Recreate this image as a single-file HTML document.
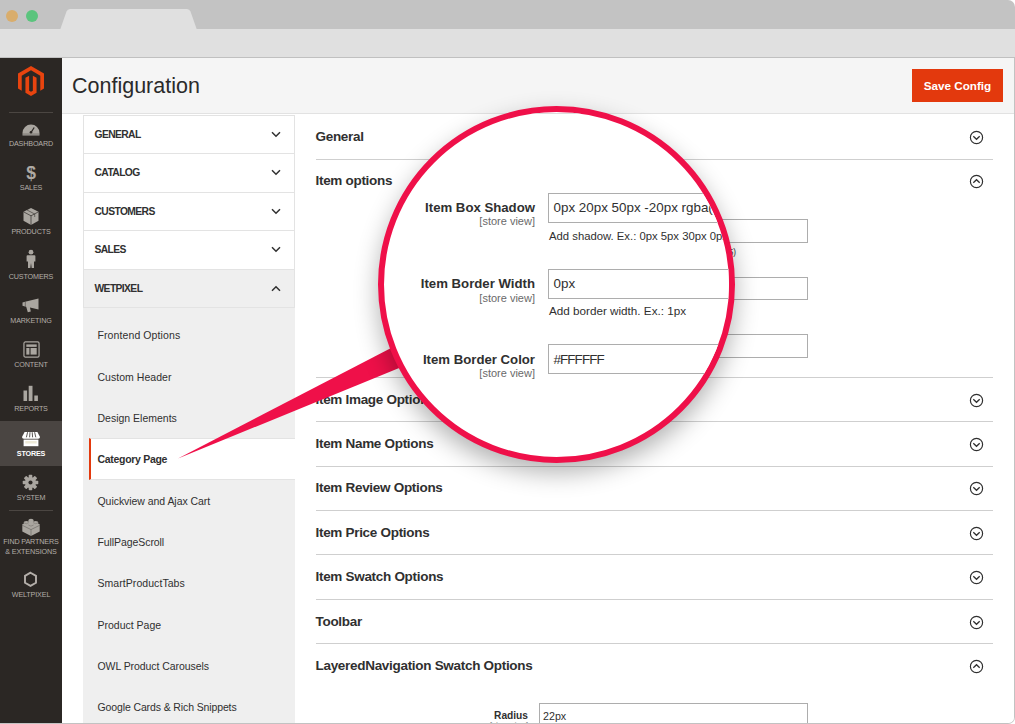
<!DOCTYPE html>
<html lang="en">
<head>
<meta charset="utf-8">
<title>Configuration</title>
<style>
*{box-sizing:border-box;margin:0;padding:0}
html,body{width:1015px;height:724px;overflow:hidden;background:#fff}
body{font-family:"Liberation Sans",sans-serif;color:#303030;position:relative}
.abs{position:absolute}
#frame{position:absolute;left:0;top:0;width:1015px;height:724px;overflow:hidden;border-radius:0 7px 7px 0;background:#fff}
#topbar{position:absolute;left:0;top:0;width:1015px;height:30px;background:#c3c3c3}
#addr{position:absolute;left:0;top:29.400px;width:1015px;height:28.600px;background:#e0e0e0;border-bottom:1px solid #c0c0c0}
.dot{position:absolute;width:12px;height:12px;border-radius:50%;top:10px}
#side{position:absolute;left:0;top:58px;width:62px;height:666px;background:#2b2724}
.mi{position:absolute;left:0;width:62px;text-align:center;font-size:7.200px;color:#b3aea8;line-height:9px;letter-spacing:-0.150px;white-space:nowrap}
.mi svg{position:absolute;left:0;top:0}
#hdr{position:absolute;left:62px;top:58px;width:953px;height:56px;background:#f5f5f5;border-bottom:1px solid #e2e2e2}
#title{position:absolute;left:72px;top:74px;font-size:21.500px;line-height:24px;color:#2a2a2a;white-space:nowrap}
#save{position:absolute;left:912px;top:69px;width:91px;height:33px;background:#e3390d;color:#fff;font-weight:bold;font-size:11.700px;line-height:34px;text-align:center;white-space:nowrap}
#nav{position:absolute;left:83px;top:115px;width:212px;height:609px;background:#efefef}
.nh{position:absolute;left:0;width:212px;height:39px;background:#fff;border:1px solid #e3e3e3;font-weight:bold;font-size:10.3px;letter-spacing:-0.6px;line-height:37px;padding-left:10.500px;color:#303030}
.nh svg{position:absolute;right:13px;top:15px}
.ni{position:absolute;left:14.5px;font-size:10.5px;line-height:14px;color:#303030;white-space:nowrap}
.sec{position:absolute;left:315.500px;font-weight:bold;font-size:13.500px;letter-spacing:-0.300px;line-height:16px;color:#303030;white-space:nowrap}
.hr{position:absolute;left:316px;width:677px;height:1px;background:#cfcfcf}
.tg{position:absolute;left:969px;width:15px;height:15px}
.inp{position:absolute;border:1px solid #adadad;background:#fff}

#mag{position:absolute;left:378px;top:106px;width:357px;height:357px;border-radius:50%;border:6.200px solid #ef1049;background:#fff;overflow:hidden;box-shadow:0 10px 25px rgba(0,0,0,.3)}
#mag .ml{position:absolute;left:-6px;width:157px;text-align:right;font-weight:bold;font-size:13.2px;line-height:16px;white-space:nowrap;color:#303030;margin-top:-2px}
#mag .ms{position:absolute;left:-6px;width:157px;text-align:right;font-size:11px;line-height:12px;white-space:nowrap;color:#6a6a6a;margin-top:-1px}
#mag .mi2{position:absolute;left:164px;width:330px;height:30px;border:1px solid #adadad;background:#fff;font-size:13.400px;line-height:28px;padding-left:4.500px;white-space:nowrap;color:#303030}
#mag .mn{position:absolute;left:165px;margin-top:-1px;font-size:11.300px;line-height:14px;white-space:nowrap;color:#303030}
</style>
</head>
<body>
<div id="frame">
<div id="topbar"></div>
<svg class="abs" style="left:55px;top:8px" width="150" height="22" viewBox="0 0 150 22"><path d="M5 22 L11.5 3.5 Q12.5 1 15 1 L132 1 Q134.500 1 135.500 3.500 L142 22 Z" fill="#e0e0e0"/></svg>
<div id="addr"></div>
<div class="dot" style="left:6px;background:#d9ad6c"></div>
<div class="dot" style="left:26px;background:#5bc47d"></div>

<div id="side"></div>

<!-- sidebar -->
<svg class="abs" style="left:18px;top:66px" width="26" height="30" viewBox="1.609 0 20.782 24"><path fill="#e8440f" d="M12 24l-4.455-2.572v-12l2.970-1.715v12.001l1.485.902 1.485-.902V7.713l2.971 1.715v12L12 24zM22.391 6v12l-2.969 1.714V7.713L12 3.430 4.574 7.713v12.001L1.609 18V6L12 0l10.391 6z"/></svg>
<div class="abs" style="left:9px;top:112px;width:44px;height:1px;background:#4b4642"></div>

<svg class="abs" style="left:22px;top:124px" width="18" height="12" viewBox="0 0 18 12"><path d="M0.500 11.500 V9 A8.500 8.500 0 0 1 17.500 9 V11.500 Z" fill="#aaa6a0"/><path d="M9 8.500 L12.200 3.500" stroke="#2b2724" stroke-width="1.300" fill="none"/><circle cx="9" cy="8.300" r="1.300" fill="#2b2724"/><rect x="0.500" y="9.700" width="17" height="0.700" fill="#2b2724" opacity=".5"/></svg>
<div class="mi" style="top:139px">DASHBOARD</div>

<div class="abs" style="left:0;top:162px;width:62px;text-align:center;font-weight:bold;font-size:17.500px;line-height:22px;color:#aeaaa4">$</div>
<div class="mi" style="top:183px">SALES</div>

<svg class="abs" style="left:22px;top:207px" width="18" height="19" viewBox="0 0 18 19"><path d="M9 1 L16.500 4.800 V13.800 L9 18 L1.500 13.800 V4.800 Z" fill="#aaa6a0"/><path d="M1.500 4.800 L9 8.800 L16.500 4.800 M9 8.800 V18" stroke="#2b2724" stroke-width="0.900" fill="none" opacity=".75"/><path d="M5 3 L12.700 7 V10" stroke="#2b2724" stroke-width="0.900" fill="none" opacity=".6"/></svg>
<div class="mi" style="top:227px">PRODUCTS</div>

<svg class="abs" style="left:25px;top:249px" width="12" height="20" viewBox="0 0 12 20"><circle cx="6" cy="3.200" r="2.400" fill="#aaa6a0"/><path d="M2.500 6.300 H9.500 Q10.400 6.300 10.400 7.300 V12.500 H9 V19 H6.700 L6 14 L5.300 19 H3 V12.500 H1.600 V7.300 Q1.600 6.300 2.500 6.300 Z" fill="#aaa6a0"/></svg>
<div class="mi" style="top:271.500px">CUSTOMERS</div>

<svg class="abs" style="left:21px;top:297px" width="20" height="17" viewBox="0 0 20 17"><path d="M1.500 5.500 L4 4.700 L17.500 1.500 V12.500 L9 10.600 L9.800 14.500 L6.800 15.200 L5.200 9.800 L4 9.500 L1.500 8.700 Z" fill="#aaa6a0"/><path d="M4.300 4.700 V9.600" stroke="#2b2724" stroke-width="0.800" opacity=".6"/></svg>
<div class="mi" style="top:315.500px">MARKETING</div>

<svg class="abs" style="left:22.500px;top:340.500px" width="17" height="17" viewBox="0 0 18 18"><rect x="1" y="1" width="16" height="16" rx="1.500" fill="none" stroke="#aaa6a0" stroke-width="1.300"/><rect x="3.500" y="3.600" width="11" height="2.600" fill="#aaa6a0"/><rect x="3.500" y="7.400" width="3.300" height="7" fill="#aaa6a0"/><rect x="8" y="7.400" width="6.500" height="7" fill="#aaa6a0"/></svg>
<div class="mi" style="top:360px">CONTENT</div>

<svg class="abs" style="left:22px;top:385px" width="18" height="17" viewBox="0 0 18 17"><rect x="1.500" y="5.500" width="3.600" height="10.500" fill="#aaa6a0"/><rect x="6.700" y="0.800" width="3.800" height="15.200" fill="#aaa6a0"/><rect x="12.300" y="10.500" width="3.600" height="5.500" fill="#aaa6a0"/></svg>
<div class="mi" style="top:404px">REPORTS</div>

<div class="abs" style="left:0;top:421px;width:62px;height:45px;background:#4a4542"></div>
<svg class="abs" style="left:21px;top:431px" width="20" height="16" viewBox="0 0 20 16"><path d="M3.600 1 H16.400 L19 6 Q19 7.800 17.200 7.800 H2.800 Q1 7.800 1 6 Z" fill="#fff"/><path d="M6.600 1.200 L5.400 6.300 M9 1.200 L8.600 6.300 M11.200 1.200 L11.600 6.300 M13.600 1.200 L14.800 6.300" stroke="#4a4542" stroke-width="0.900"/><rect x="2.600" y="8.600" width="14.800" height="6.600" fill="#fff"/><rect x="4.300" y="10" width="11.400" height="2.500" fill="#eeead8"/></svg>
<div class="mi" style="top:449px;color:#fff;font-weight:bold">STORES</div>

<svg class="abs" style="left:22px;top:474px" width="17" height="17" viewBox="-9.500 -9.500 19 19"><g fill="#aaa6a0"><circle r="6.200"/><g id="t"><rect x="-2" y="-8.700" width="4" height="4" rx="0.800"/></g><use href="#t" transform="rotate(45)"/><use href="#t" transform="rotate(90)"/><use href="#t" transform="rotate(135)"/><use href="#t" transform="rotate(180)"/><use href="#t" transform="rotate(225)"/><use href="#t" transform="rotate(270)"/><use href="#t" transform="rotate(315)"/></g><circle r="2.300" fill="#2b2724"/></svg>
<div class="mi" style="top:493px">SYSTEM</div>
<div class="abs" style="left:9px;top:510px;width:44px;height:1px;background:#4b4642"></div>

<svg class="abs" style="left:20px;top:517px" width="22" height="20" viewBox="0 0 22 20"><path d="M11 3.200 L19.700 7.300 V14.500 L11 19 L2.300 14.500 V7.300 Z" fill="#aaa6a0"/><ellipse cx="11" cy="3.500" rx="2.700" ry="1.700" fill="#aaa6a0"/><ellipse cx="6.300" cy="5.800" rx="2.700" ry="1.700" fill="#aaa6a0"/><ellipse cx="15.700" cy="5.800" rx="2.700" ry="1.700" fill="#aaa6a0"/><ellipse cx="11" cy="8.300" rx="2.700" ry="1.700" fill="#aaa6a0"/><path d="M2.300 8.300 L11 12.600 L19.700 8.300 M11 12.600 V19" stroke="#2b2724" stroke-width="0.700" fill="none" opacity=".45"/><path d="M8.400 8 Q11 10.300 13.600 8 M3.700 5.600 Q6.300 7.900 8.900 5.600 M13.100 5.600 Q15.700 7.900 18.300 5.600" stroke="#2b2724" stroke-width="0.600" fill="none" opacity=".4"/></svg>
<div class="mi" style="top:537px;line-height:9.600px">FIND PARTNERS<br>&amp; EXTENSIONS</div>

<svg class="abs" style="left:22px;top:570px" width="18" height="19" viewBox="0 0 18 19"><path d="M8.500 2.700 L14 5.900 V12.700 L8.500 15.900 L3 12.700 V5.900 Z" fill="none" stroke="#b4afaa" stroke-width="1.900"/></svg>
<div class="mi" style="top:590px">WELTPIXEL</div>
<div id="hdr"></div>
<div id="title">Configuration</div>
<div id="save">Save Config</div>

<div id="nav">
<div class="nh" style="top:0px;height:39px">GENERAL<svg width="10" height="7" viewBox="0 0 10 7"><path d="M1 1.200 L5 5.200 L9 1.200" fill="none" stroke="#303030" stroke-width="1.500"/></svg></div>
<div class="nh" style="top:38px;height:40px">CATALOG<svg width="10" height="7" viewBox="0 0 10 7"><path d="M1 1.200 L5 5.200 L9 1.200" fill="none" stroke="#303030" stroke-width="1.500"/></svg></div>
<div class="nh" style="top:77px;height:39px">CUSTOMERS<svg width="10" height="7" viewBox="0 0 10 7"><path d="M1 1.200 L5 5.200 L9 1.200" fill="none" stroke="#303030" stroke-width="1.500"/></svg></div>
<div class="nh" style="top:115px;height:40px">SALES<svg width="10" height="7" viewBox="0 0 10 7"><path d="M1 1.200 L5 5.200 L9 1.200" fill="none" stroke="#303030" stroke-width="1.500"/></svg></div>
<div class="nh" style="top:154px;height:39px;background:#efefef;border-color:#e3e3e3">WETPIXEL<svg width="10" height="7" viewBox="0 0 10 7"><path d="M1 5.800 L5 1.800 L9 5.800" fill="none" stroke="#303030" stroke-width="1.500"/></svg></div>
<div class="ni" style="top:213px;letter-spacing:0.1px">Frontend Options</div>
<div class="ni" style="top:255px;letter-spacing:0.03px">Custom Header</div>
<div class="ni" style="top:296px;letter-spacing:0px">Design Elements</div>
<div class="abs" style="left:6px;top:322.8px;width:206px;height:42px;background:#fff;border-left:2px solid #e3390d;border-top:1px solid #e3e3e3;border-bottom:1px solid #e3e3e3"></div>
<div class="ni" style="top:337px;font-weight:bold;letter-spacing:-0.3px">Category Page</div>
<div class="ni" style="top:379px;letter-spacing:-0.05px">Quickview and Ajax Cart</div>
<div class="ni" style="top:420px;letter-spacing:-0.08px">FullPageScroll</div>
<div class="ni" style="top:461px;letter-spacing:0.06px">SmartProductTabs</div>
<div class="ni" style="top:503px;letter-spacing:0px">Product Page</div>
<div class="ni" style="top:544px;letter-spacing:-0.07px">OWL Product Carousels</div>
<div class="ni" style="top:585px;letter-spacing:-0.12px">Google Cards &amp; Rich Snippets</div>
</div>

<!-- main sections -->
<div class="sec" style="top:129px">General</div>
<svg class="tg" style="top:129.5px" viewBox="0 0 15 15"><circle cx="7.500" cy="7.500" r="6.100" fill="none" stroke="#303030" stroke-width="1.200"/><path d="M4.300 6.300 L7.500 9.300 L10.700 6.300" fill="none" stroke="#303030" stroke-width="1.300"/></svg>
<div class="sec" style="top:173px">Item options</div>
<svg class="tg" style="top:173.5px" viewBox="0 0 15 15"><circle cx="7.500" cy="7.500" r="6.100" fill="none" stroke="#303030" stroke-width="1.200"/><path d="M4.300 8.700 L7.500 5.700 L10.700 8.700" fill="none" stroke="#303030" stroke-width="1.300"/></svg>
<div class="sec" style="top:392px">Item Image Options</div>
<svg class="tg" style="top:392.5px" viewBox="0 0 15 15"><circle cx="7.500" cy="7.500" r="6.100" fill="none" stroke="#303030" stroke-width="1.200"/><path d="M4.300 6.300 L7.500 9.300 L10.700 6.300" fill="none" stroke="#303030" stroke-width="1.300"/></svg>
<div class="sec" style="top:436px">Item Name Options</div>
<svg class="tg" style="top:436.5px" viewBox="0 0 15 15"><circle cx="7.500" cy="7.500" r="6.100" fill="none" stroke="#303030" stroke-width="1.200"/><path d="M4.300 6.300 L7.500 9.300 L10.700 6.300" fill="none" stroke="#303030" stroke-width="1.300"/></svg>
<div class="sec" style="top:480px">Item Review Options</div>
<svg class="tg" style="top:480.5px" viewBox="0 0 15 15"><circle cx="7.500" cy="7.500" r="6.100" fill="none" stroke="#303030" stroke-width="1.200"/><path d="M4.300 6.300 L7.500 9.300 L10.700 6.300" fill="none" stroke="#303030" stroke-width="1.300"/></svg>
<div class="sec" style="top:525px">Item Price Options</div>
<svg class="tg" style="top:525.5px" viewBox="0 0 15 15"><circle cx="7.500" cy="7.500" r="6.100" fill="none" stroke="#303030" stroke-width="1.200"/><path d="M4.300 6.300 L7.500 9.300 L10.700 6.300" fill="none" stroke="#303030" stroke-width="1.300"/></svg>
<div class="sec" style="top:569px">Item Swatch Options</div>
<svg class="tg" style="top:569.5px" viewBox="0 0 15 15"><circle cx="7.500" cy="7.500" r="6.100" fill="none" stroke="#303030" stroke-width="1.200"/><path d="M4.300 6.300 L7.500 9.300 L10.700 6.300" fill="none" stroke="#303030" stroke-width="1.300"/></svg>
<div class="sec" style="top:614px">Toolbar</div>
<svg class="tg" style="top:614.5px" viewBox="0 0 15 15"><circle cx="7.500" cy="7.500" r="6.100" fill="none" stroke="#303030" stroke-width="1.200"/><path d="M4.300 6.300 L7.500 9.300 L10.700 6.300" fill="none" stroke="#303030" stroke-width="1.300"/></svg>
<div class="sec" style="top:658px">LayeredNavigation Swatch Options</div>
<svg class="tg" style="top:658.5px" viewBox="0 0 15 15"><circle cx="7.500" cy="7.500" r="6.100" fill="none" stroke="#303030" stroke-width="1.200"/><path d="M4.300 8.700 L7.500 5.700 L10.700 8.700" fill="none" stroke="#303030" stroke-width="1.300"/></svg>
<div class="hr" style="top:158.5px"></div>
<div class="hr" style="top:376.5px"></div>
<div class="hr" style="top:420.5px"></div>
<div class="hr" style="top:465.5px"></div>
<div class="hr" style="top:509.5px"></div>
<div class="hr" style="top:553.5px"></div>
<div class="hr" style="top:598.5px"></div>
<div class="hr" style="top:642.5px"></div>
<div class="inp" style="left:539px;top:219px;width:269px;height:24px"></div>
<div class="inp" style="left:539px;top:277px;width:269px;height:23px"></div>
<div class="inp" style="left:539px;top:334px;width:269px;height:24px"></div>
<div class="abs" style="left:539px;top:247px;width:269px;font-size:8.200px;line-height:11px;white-space:nowrap;color:#303030">Add shadow. Ex.: 0px 5px 30px 0px rgba(0, 0, 0, 0.15)</div>
<div class="abs" style="left:428px;top:710px;width:100px;text-align:right;font-weight:bold;font-size:10.200px;line-height:12px">Radius</div>
<div class="abs" style="left:428px;top:720px;width:100px;text-align:right;font-size:7.500px;line-height:9px;color:#777">[store view]</div>
<div class="inp" style="left:539px;top:703px;width:269px;height:24px"></div>
<div class="abs" style="left:543px;top:710px;font-size:10.700px;line-height:12px">22px</div>
<svg class="abs" style="left:0;top:0;pointer-events:none" width="1015" height="724" viewBox="0 0 1015 724"><path d="M178 458.500 L394 346.500 L404 366 Z" fill="#ef1049"/></svg>
<div id="mag">
<div class="abs" style="left:128px;top:1px;width:100px;height:1px;background:#dcdcdc"></div>
<div class="ml" style="top:90px">Item Box Shadow</div><div class="ms" style="top:104px">[store view]</div>
<div class="mi2" style="top:81px">0px 20px 50px -20px rgba(0, 0, 0, 0.15)</div>
<div class="mn" style="top:118px">Add shadow. Ex.: 0px 5px 30px 0px rgba(0, 0, 0, 0.15)</div>
<div class="ml" style="top:166px">Item Border Width</div><div class="ms" style="top:180.500px">[store view]</div>
<div class="mi2" style="top:157px">0px</div>
<div class="mn" style="top:193px;font-size:11.700px">Add border width. Ex.: 1px</div>
<div class="ml" style="top:242px">Item Border Color</div><div class="ms" style="top:256px">[store view]</div>
<div class="mi2" style="top:232px;letter-spacing:-0.900px;line-height:29px">#FFFFFF</div>
</div>
<div class="abs" style="left:-4px;top:56px;width:1019.500px;height:668.500px;border:2px solid #c2c2c2;border-top-color:transparent;border-radius:0 0 7px 0;pointer-events:none"></div>
</div>
</body>
</html>
